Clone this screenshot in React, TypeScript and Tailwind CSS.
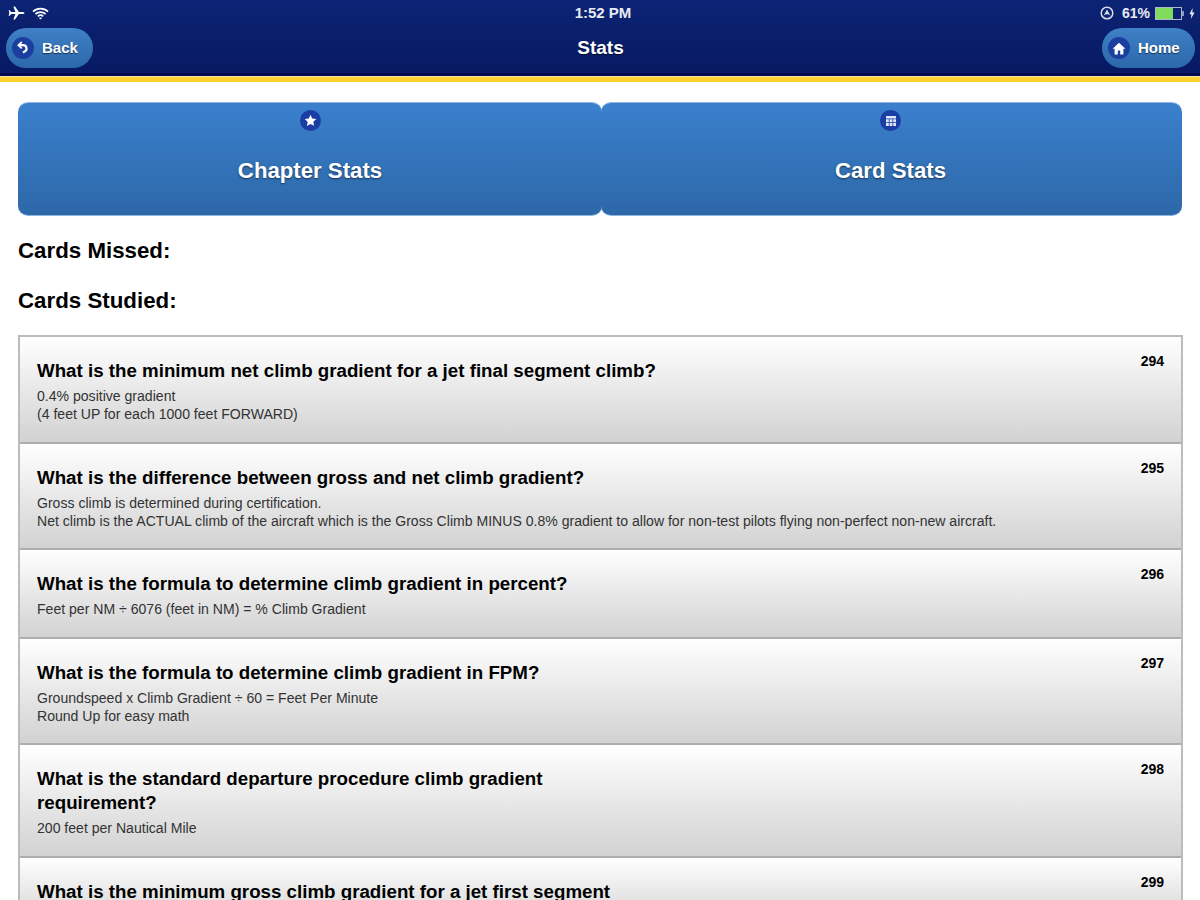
import React from 'react';

const rows = [
  {
    num: '294',
    title: 'What is the minimum net climb gradient for a jet final segment climb?',
    lines: ['0.4% positive gradient', '(4 feet UP for each 1000 feet FORWARD)'],
  },
  {
    num: '295',
    title: 'What is the difference between gross and net climb gradient?',
    lines: [
      'Gross climb is determined during certification.',
      'Net climb is the ACTUAL climb of the aircraft which is the Gross Climb MINUS 0.8% gradient to allow for non-test pilots flying non-perfect non-new aircraft.',
    ],
  },
  {
    num: '296',
    title: 'What is the formula to determine climb gradient in percent?',
    lines: ['Feet per NM ÷ 6076 (feet in NM) = % Climb Gradient'],
  },
  {
    num: '297',
    title: 'What is the formula to determine climb gradient in FPM?',
    lines: ['Groundspeed x Climb Gradient ÷ 60 = Feet Per Minute', 'Round Up for easy math'],
  },
  {
    num: '298',
    title: 'What is the standard departure procedure climb gradient requirement?',
    lines: ['200 feet per Nautical Mile'],
  },
  {
    num: '299',
    title: 'What is the minimum gross climb gradient for a jet first segment',
    lines: [],
  },
];

const PlaneIcon = () => (
  <svg width="18" height="14" viewBox="0 0 18 14" fill="#fff">
    <path d="M17.5 7c0-.7-1-1.1-2-1.1h-3.6L8 .6H6.4l2 5.3H4.2L2.8 4.2H1.6l.7 2.8-.7 2.8h1.2l1.4-1.7h4.2l-2 5.3H8l3.9-5.3h3.6c1 0 2-.4 2-1.1z" />
  </svg>
);

const WifiIcon = () => (
  <svg width="17" height="13" viewBox="0 0 17 13" fill="none" stroke="#fff" strokeWidth="1.7">
    <path d="M1 4.6c4.2-4 10.8-4 15 0" />
    <path d="M3.4 7c2.9-2.6 7.3-2.6 10.2 0" />
    <path d="M5.8 9.3c1.6-1.3 3.8-1.3 5.4 0" />
    <path d="M8.5 12.6l1.5-1.6c-.9-.6-2.1-.6-3 0z" fill="#fff" stroke="none" />
  </svg>
);

const LockIcon = () => (
  <svg width="14" height="14" viewBox="0 0 14 14" fill="none">
    <circle cx="7" cy="7" r="5.8" stroke="#d8dbe8" strokeWidth="1.5" />
    <path d="M3.6 9.4L7 3.6l3.4 5.8C8.4 8 5.6 8 3.6 9.4z" fill="#d8dbe8" />
  </svg>
);

const Battery = () => (
  <div className="flex items-center">
    <div className="w-[27px] h-[13px] border border-[#aeb6d0]">
      <div className="w-[17px] h-full bg-[#7fdc5c]" />
    </div>
    <div className="w-[2px] h-[5px] bg-[#8e98bb]" />
  </div>
);

const BoltIcon = () => (
  <svg width="6" height="11" viewBox="0 0 6 11" fill="#e4e6ef">
    <path d="M3.6 0L.4 6.2h2L1.8 11l3.8-6.6h-2.2z" />
  </svg>
);

const NavButton = ({ label, icon, className }: { label: string; icon: React.ReactNode; className: string }) => (
  <button
    className={`h-10 rounded-[20px] flex items-center bg-gradient-to-b from-[#3f80c6] to-[#2c68ab] text-[15px] font-bold text-white [text-shadow:0_1px_1px_rgba(0,0,0,0.6)] ${className}`}
  >
    <span className="w-[22px] h-[22px] rounded-full bg-[#1a3f9f] flex items-center justify-center">{icon}</span>
    {label}
  </button>
);

const StatTab = ({ label, icon, className }: { label: string; icon: React.ReactNode; className: string }) => (
  <button
    className={`flex-1 h-[114px] rounded-[10px] flex flex-col items-center bg-gradient-to-b from-[#3a80cd] to-[#2d68a8] border-y border-[#8fb6e0] pt-[7px] ${className}`}
  >
    <span className="w-[21px] h-[21px] rounded-full bg-[#1b3ea5] flex items-center justify-center">{icon}</span>
    <span className="mt-[27px] text-[22.2px] leading-[26px] font-bold text-white [text-shadow:0_1px_2px_rgba(0,0,0,0.55)]">
      {label}
    </span>
  </button>
);

export default function App() {
  return (
    <div className="w-[1200px] h-[900px] overflow-hidden bg-white font-['Liberation_Sans',Arial,sans-serif] text-black">
      <header className="bg-gradient-to-b from-[#0c2475] to-[#07185f]">
        <div className="h-[26px] grid grid-cols-3 items-center pl-[7px] pr-[5px] text-[#e8eaf2]">
          <div className="flex items-center gap-[7px]">
            <PlaneIcon />
            <WifiIcon />
          </div>
          <div className="text-center text-[15px] font-bold pl-1">1:52 PM</div>
          <div className="flex items-center justify-end text-[14px] font-bold">
            <LockIcon />
            <span className="w-[28px] ml-2 mr-[5px]">61%</span>
            <Battery />
            <span className="ml-[5px]">
              <BoltIcon />
            </span>
          </div>
        </div>
        <div className="h-[47px] grid grid-cols-[1fr_auto_1fr] items-start pt-[2px] pl-[6px] pr-[5px]">
          <div>
            <NavButton
              label="Back"
              className="w-[87px] pl-[6px] gap-[8px]"
              icon={
                <svg width="14" height="14" viewBox="0 0 14 14" fill="none" stroke="#fff" strokeWidth="2.2">
                  <path d="M3.5 4.2h3.7a3.3 3.3 0 0 1 1.6 6.2L7 11.6" />
                  <path d="M5.8 1L2.4 4.2l3.4 3.2" fill="none" strokeWidth="1.8" />
                </svg>
              }
            />
          </div>
          <div className="text-[19px] leading-[40px] font-bold text-white [text-shadow:0_1px_1px_rgba(0,0,0,0.6)]">Stats</div>
          <div className="flex justify-end">
            <NavButton
              label="Home"
              className="w-[93px] pl-[6px] gap-[8px]"
              icon={
                <svg width="14" height="13" viewBox="0 0 14 13" fill="#fff">
                  <path d="M7 .8L.6 6.8h2v5.6h3.2V8.6h2.4v3.8h3.2V6.8h2z" />
                </svg>
              }
            />
          </div>
        </div>
        <div className="h-[3px] bg-[#000b4f]" />
        <div className="h-[6px] bg-[#fdd22e] border-t border-[#f4e6b0]" />
      </header>

      <main className="px-[18px] pt-[20px]">
        <div className="flex">
          <StatTab
            label="Chapter Stats"
            className="w-[584px] flex-none"
            icon={
              <svg width="13" height="13" viewBox="0 0 24 24" fill="#fff">
                <path d="M12 1.5l3.2 6.9 7.5.9-5.5 5.2 1.4 7.4L12 18.3 5.4 22l1.4-7.4L1.3 9.3l7.5-.9z" />
              </svg>
            }
          />
          <StatTab
            label="Card Stats"
            className="-ml-px pr-[2px]"
            icon={
              <svg width="12" height="12" viewBox="0 0 12 12" fill="#dfe6f7">
                <path d="M1 1h10v2.4H1zM1 4.3h2.8v2.9H1zM4.6 4.3h2.8v2.9H4.6zM8.2 4.3H11v2.9H8.2zM1 8h2.8v3H1zM4.6 8h2.8v3H4.6zM8.2 8H11v3H8.2z" />
              </svg>
            }
          />
        </div>

        <h2 className="mt-[22px] text-[22.3px] leading-[26px] font-bold">Cards Missed:</h2>
        <h2 className="mt-[24px] text-[22.3px] leading-[26px] font-bold">Cards Studied:</h2>

        <ul className="mt-[21px] w-[1165px] border-x-2 border-t-2 border-[#bcbcbc]">
          {rows.map((r) => (
            <li
              key={r.num}
              className="flex justify-between pl-[17px] pr-[17px] pt-[22px] pb-[18.5px] bg-gradient-to-b from-white to-[#d2d2d2] border-b-2 border-[#adadad]"
            >
              <div className="min-w-0 flex-1">
                <h3 className="max-w-[625px] text-[18.73px] leading-[24px] font-bold text-black">{r.title}</h3>
                <div className="mt-1 text-[14.07px] leading-[18px] text-[#333]">
                  {r.lines.map((l) => (
                    <p key={l}>{l}</p>
                  ))}
                </div>
              </div>
              <span className="-mt-[5px] text-[14px] leading-[14px] font-bold text-black">{r.num}</span>
            </li>
          ))}
        </ul>
      </main>
    </div>
  );
}
